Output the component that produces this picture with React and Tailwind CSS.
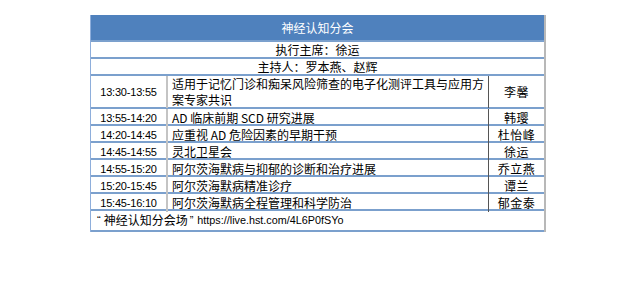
const rows = [
  { time: '13:30-13:55', topic: '适用于记忆门诊和痴呆风险筛查的电子化测评工具与应用方案专家共识', speaker: '李馨', tall: true },
  { time: '13:55-14:20', topic: 'AD 临床前期 SCD 研究进展', speaker: '韩璎' },
  { time: '14:20-14:45', topic: '应重视 AD 危险因素的早期干预', speaker: '杜怡峰' },
  { time: '14:45-14:55', topic: '灵北卫星会', speaker: '徐运' },
  { time: '14:55-15:20', topic: '阿尔茨海默病与抑郁的诊断和治疗进展', speaker: '乔立燕' },
  { time: '15:20-15:45', topic: '阿尔茨海默病精准诊疗', speaker: '谭兰' },
  { time: '15:45-16:10', topic: '阿尔茨海默病全程管理和科学防治', speaker: '郁金泰' },
];

const cjk = "font-['Noto_Sans_CJK_SC',sans-serif]";
const latin = "font-['Liberation_Sans','Noto_Sans_CJK_SC',sans-serif]";

export default function App() {
  return (
    <div className="w-[635px] h-[293px] bg-white pt-[15px] pl-[90px]">
      <div className="w-[456px] border-l border-[#8eaedb] border-r-2 border-r-[#b8b8b8] text-[12px] text-black">
        <div className={`h-[27px] bg-[#4f81bd] border-b-2 border-[#7ba0cd] flex items-center justify-center text-white ${cjk}`}>
          神经认知分会
        </div>
        <div className={`h-[17px] border-b-2 border-[#7ba0cd] flex items-center justify-center leading-none ${cjk}`}>
          执行主席：徐运
        </div>
        <div className={`h-[17px] border-b-2 border-[#7ba0cd] flex items-center justify-center leading-none ${cjk}`}>
          主持人：罗本燕、赵辉
        </div>
        {rows.map((r) => (
          <div
            key={r.time}
            className={`grid grid-cols-[77px_320px_1fr] border-b-2 border-[#7ba0cd] ${r.tall ? 'h-[33px]' : 'h-[17px]'}`}
          >
            <div className={`flex items-center justify-center border-r-2 border-[#c4c4c4] text-[11px] tracking-[-0.2px] ${latin}`}>
              {r.time}
            </div>
            <div className={`flex items-center pl-[4px] pr-0 leading-[16px] ${cjk}`}>
              {r.topic}
            </div>
            <div className={`flex items-center justify-center border-l border-[#555] tracking-[0.5px] ${cjk}`}>
              {r.speaker}
            </div>
          </div>
        ))}
        <div className={`h-[21px] border-b-2 border-[#7ba0cd] pl-[6px] pt-[2px] leading-[14px] flex items-start ${latin}`}>
          <span className="text-[11px]">“</span>
          <span className={`${cjk} ml-[3px] mr-[2px]`}>神经认知分会场</span>
          <span className="text-[11px]">”</span>
          <span className="text-[10.8px] ml-[4px]">https://live.hst.com/4L6P0fSYo</span>
        </div>
      </div>
    </div>
  );
}
